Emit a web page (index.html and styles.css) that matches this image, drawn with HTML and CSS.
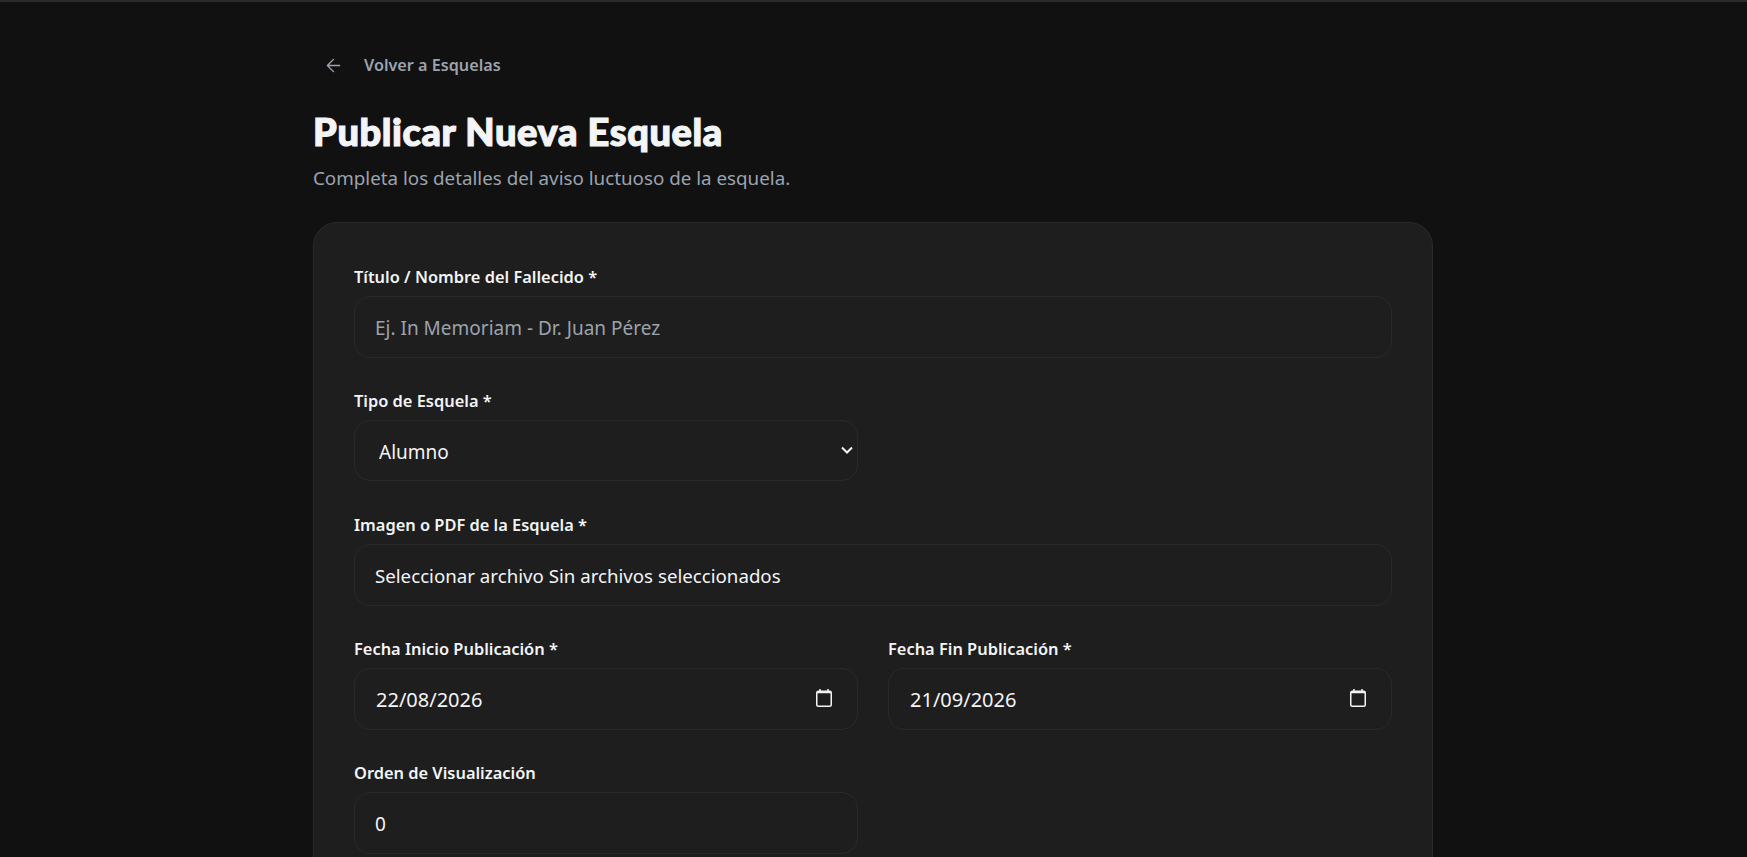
FILE: index.html
```html
<!DOCTYPE html>
<html lang="es">
<head>
    <meta charset="UTF-8">
    <title>Publicar Nueva Esquela</title>
    <link rel="stylesheet" href="styles.css">
</head>
<body>
<div class="topLine"></div>
<div class="con">
    <a href="#" class="back">
        <svg class="backIcon" viewBox="0 0 24 24"><path d="M19 12H5M12 19l-7-7 7-7"/></svg>
        <span>Volver a Esquelas</span>
    </a>
    <h1>Publicar Nueva Esquela</h1>
    <p class="sub">Completa los detalles del aviso luctuoso de la esquela.</p>
    <form class="card">
        <div class="group">
            <label>Título / Nombre del Fallecido *</label>
            <input class="field" type="text" placeholder="Ej. In Memoriam - Dr. Juan Pérez">
        </div>
        <div class="row">
            <div class="group">
                <label>Tipo de Esquela *</label>
                <div class="selectWrap">
                    <select class="field">
                        <option>Alumno</option>
                    </select>
                    <svg class="chevron" viewBox="0 0 12 8"><path d="M1 1.5l5 5 5-5"/></svg>
                </div>
            </div>
            <div></div>
        </div>
        <div class="group">
            <label>Imagen o PDF de la Esquela *</label>
            <div class="field fileField">Seleccionar archivo Sin archivos seleccionados</div>
        </div>
        <div class="row">
            <div class="group">
                <label>Fecha Inicio Publicación *</label>
                <div class="field dateField">
                    <span>22/08/2026</span>
                    <svg class="calIcon" viewBox="0 0 16 18"><path d="M4 0v2.5M12 0v2.5"/><rect x="0.75" y="2.25" width="14.5" height="15" rx="1.5"/><path class="calBar" d="M1 3.25h14"/></svg>
                </div>
            </div>
            <div class="group">
                <label>Fecha Fin Publicación *</label>
                <div class="field dateField">
                    <span>21/09/2026</span>
                    <svg class="calIcon" viewBox="0 0 16 18"><path d="M4 0v2.5M12 0v2.5"/><rect x="0.75" y="2.25" width="14.5" height="15" rx="1.5"/><path class="calBar" d="M1 3.25h14"/></svg>
                </div>
            </div>
        </div>
        <div class="row">
            <div class="group">
                <label>Orden de Visualización</label>
                <input class="field" type="text" value="0">
            </div>
            <div></div>
        </div>
    </form>
</div>
</body>
</html>
```

FILE: styles.css
```css
html,body{
    margin:0;
    padding:0;
    height:100%;
    overflow:hidden;
}
body{
    background:#111;
    color:#f3f4f6;
    font-family:"Noto Sans","Open Sans",sans-serif;
    color-scheme:dark;
}
.topLine{
    height:2px;
    background:#2a2a2a;
}
.con{
    width:1120px;
    margin:0 0 0 313px;
    padding-top:53px;
}
.back{
    display:flex;
    align-items:center;
    gap:20px;
    padding-left:10px;
    height:20px;
    color:#9ca3af;
    text-decoration:none;
    font-size:16.2px;
    font-weight:600;
}
.backIcon{
    width:21px;
    height:21px;
    fill:none;
    stroke:#9ca3af;
    stroke-width:1.6;
    stroke-linecap:round;
    stroke-linejoin:round;
}
h1{
    margin:32px 0 0 0;
    font-family:"Lato","Noto Sans",sans-serif;
    font-size:38px;
    line-height:48px;
    font-weight:900;
    letter-spacing:.6px;
    -webkit-text-stroke:1.2px #f3f4f6;
    color:#f3f4f6;
}
.sub{
    margin:9px 0 0 0;
    font-size:18.8px;
    line-height:28px;
    color:#9ca3af;
}
.card{
    margin-top:30px;
    padding:40px;
    height:800px;
    background:#1e1e1e;
    border:1px solid #2a2a2a;
    border-radius:24px;
}
.group{
    margin-bottom:29px;
}
.group label{
    display:block;
    padding-top:1px;
    margin-bottom:7px;
    font-size:16.4px;
    line-height:25px;
    font-weight:600;
    color:#f3f4f6;
}
.row{
    display:grid;
    grid-template-columns:1fr 1fr;
    gap:30px;
}
.field{
    display:block;
    box-sizing:border-box;
    width:100%;
    height:62px;
    padding:2px 20px 0 20px;
    background:#1e1e1e;
    border:1px solid #2a2a2a;
    border-radius:16px;
    color:#f3f4f6;
    font-family:inherit;
    font-size:19px;
    outline:none;
}
.field::placeholder{
    color:#9ca3af;
    opacity:1;
}
.selectWrap{
    position:relative;
    height:62px;
}
.selectWrap select{
    appearance:none;
    height:61px;
    padding-left:24px;
}
.chevron{
    position:absolute;
    right:5px;
    top:26px;
    width:12px;
    height:8px;
    fill:none;
    stroke:#f3f4f6;
    stroke-width:2;
    pointer-events:none;
}
.fileField{
    display:flex;
    align-items:center;
    padding-top:0;
    font-size:18.7px;
}
.dateField{
    display:flex;
    align-items:center;
    justify-content:space-between;
    padding:0 20px 0 21px;
    font-size:20px;
}
.calIcon{
    width:16px;
    height:18px;
    margin:0 5px 2px 0;
    fill:none;
    stroke:#f3f4f6;
    stroke-width:1.5;
}
.calBar{
    stroke-width:2;
}
```
